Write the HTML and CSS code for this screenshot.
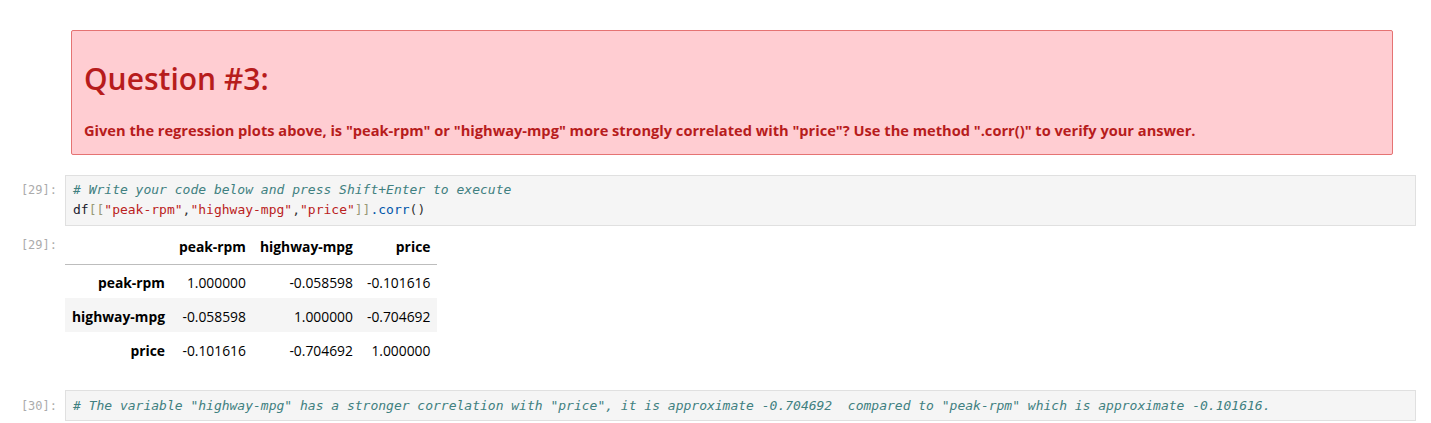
FILE: index.html
```html
<!DOCTYPE html>
<html>
<head>
<meta charset="utf-8">
<link rel="stylesheet" href="styles.css">
</head>
<body>
<div class="notebook">
  <div class="cell md-cell">
    <div class="prompt"></div>
    <div class="md-content">
      <div class="alert">
        <h2 class="alert-title">Question #3:</h2>
        <p class="alert-text">Given the regression plots above, is "peak-rpm" or "highway-mpg" more strongly correlated with "price"? Use the method ".corr()" to verify your answer.</p>
      </div>
    </div>
  </div>

  <div class="cell code-cell first-code">
    <div class="prompt">[29]:</div>
    <div class="editor">
      <div class="line"><span class="c-comment"># Write your code below and press Shift+Enter to execute</span></div>
      <div class="line"><span class="c-var">df</span><span class="c-brk">[[</span><span class="c-str">"peak-rpm"</span><span class="c-punc">,</span><span class="c-str">"highway-mpg"</span><span class="c-punc">,</span><span class="c-str">"price"</span><span class="c-brk">]]</span><span class="c-prop">.corr</span><span class="c-punc">()</span></div>
    </div>
  </div>

  <div class="cell output-cell">
    <div class="prompt out-prompt">[29]:</div>
    <div class="output">
      <table class="df">
        <thead>
          <tr><th></th><th>peak-rpm</th><th>highway-mpg</th><th>price</th></tr>
        </thead>
        <tbody>
          <tr><th>peak-rpm</th><td>1.000000</td><td>-0.058598</td><td>-0.101616</td></tr>
          <tr class="odd"><th>highway-mpg</th><td>-0.058598</td><td>1.000000</td><td>-0.704692</td></tr>
          <tr><th>price</th><td>-0.101616</td><td>-0.704692</td><td>1.000000</td></tr>
        </tbody>
      </table>
    </div>
  </div>

  <div class="cell code-cell last-cell">
    <div class="prompt">[30]:</div>
    <div class="editor">
      <div class="line"><span class="c-comment"># The variable "highway-mpg" has a stronger correlation with "price", it is approximate -0.704692  compared to "peak-rpm" which is approximate -0.101616.</span></div>
    </div>
  </div>
</div>
</body>
</html>
```

FILE: styles.css
```css
html, body {
  margin: 0;
  padding: 0;
  background: #ffffff;
}

body {
  font-family: "Open Sans", "Noto Sans", sans-serif;
  color: #000;
}

.notebook {
  padding-top: 30px;
}

.cell {
  display: flex;
  align-items: flex-start;
}

.prompt {
  width: 65px;
  flex: none;
  box-sizing: border-box;
  padding-right: 8px;
  text-align: right;
  font-family: "DejaVu Sans Mono", monospace;
  font-size: 12px;
  color: #ababab;
  line-height: 20px;
}

/* markdown alert */
.md-content {
  flex: 1;
  padding-left: 6px;
  margin-right: 38px;
}

.alert {
  background: #ffcdd2;
  border: 1px solid #e57373;
  border-radius: 2px;
  padding: 14px 12px 14px 12px;
  color: #b71c1c;
}

.alert-title {
  margin: 15px 0 0 0;
  font-size: 30px;
  font-weight: 600;
  line-height: 38px;
}

.alert-text {
  margin: 22px 0 0 0;
  font-size: 14.63px;
  font-weight: 700;
  line-height: 20px;
}

/* code cells */
.code-cell {
  margin-top: 20px;
}

.code-cell .prompt {
  padding-top: 5px;
}

.editor {
  flex: 1;
  margin-right: 15px;
  background: #f5f5f5;
  border: 1px solid #e0e0e0;
  padding: 4px 7px 5px 7px;
  font-family: "DejaVu Sans Mono", monospace;
  font-size: 13px;
  line-height: 20px;
}

.line {
  white-space: pre;
}

.c-comment { color: #408080; font-style: italic; }
.c-var { color: #1a1a2e; }
.c-brk { color: #999977; }
.c-str { color: #ba2121; }
.c-punc { color: #333; }
.c-prop { color: #0055aa; }

/* output */
.output-cell {
  margin-top: 3px;
}

.out-prompt {
  padding-top: 6px;
}

.output {
  flex: 1;
}

.df {
  border-collapse: collapse;
  font-family: "Open Sans", "Noto Sans", sans-serif;
  font-size: 13.85px;
  color: #000;
}

.df th,
.df td {
  text-align: right;
  padding: 2px 7px 0 7px;
  height: 34px;
  box-sizing: border-box;
  white-space: nowrap;
}

.df th {
  font-weight: 700;
}

.df td {
  font-weight: 400;
}

.df thead th {
  border-bottom: 1px solid #bdbdbd;
  height: 35px;
  padding-top: 0;
}

.df tbody tr.odd {
  background: #f5f5f5;
}

.last-cell {
  margin-top: 24px;
}

.last-cell .editor {
  padding: 5px 7px 4px 7px;
}

.last-cell .prompt {
  padding-top: 6px;
}
```
